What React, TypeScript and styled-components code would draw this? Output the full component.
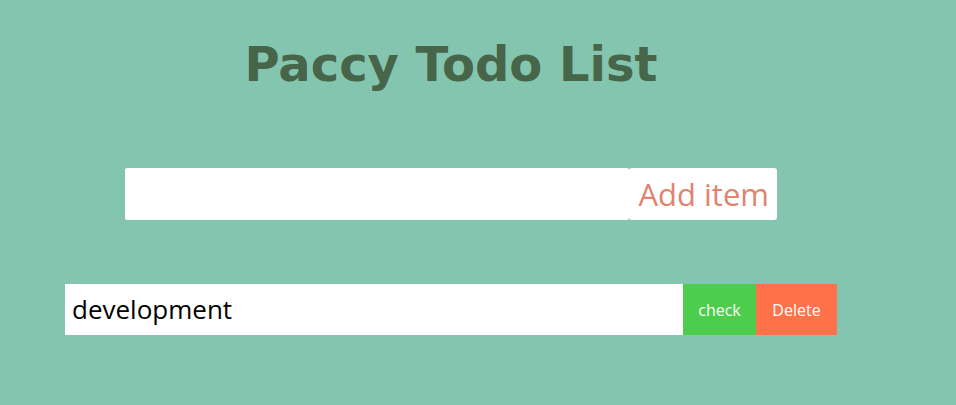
import React from "react";
import styled, { createGlobalStyle } from "styled-components";

const Global = createGlobalStyle`
  html, body { margin: 0; padding: 0; background: #83c5af; }
  body { font-family: "Open Sans", "Noto Sans", sans-serif; }
`;

const Page = styled.div`
  width: 902px;
  height: 405px;
  display: flex;
  flex-direction: column;
  align-items: center;
`;

const Title = styled.h1`
  margin: 34px 0 0;
  font-family: "DejaVu Sans", sans-serif;
  font-weight: bold;
  font-size: 48px;
  line-height: 60px;
  color: #476549;
`;

const AddForm = styled.form`
  display: flex;
  margin-top: 74px;
`;

const Input = styled.input`
  width: 504px;
  height: 52px;
  box-sizing: border-box;
  border: none;
  border-radius: 2px;
  background: #fff;
  outline: none;
  padding: 0 8px;
  font-size: 24px;
`;

const AddButton = styled.button`
  width: 148px;
  height: 52px;
  border: none;
  border-radius: 3px;
  background: #fff;
  color: #e0836f;
  font-family: "Open Sans", sans-serif;
  font-size: 31px;
  padding: 0 8px 0 0;
  text-align: right;
`;

const TodoRow = styled.div`
  display: flex;
  margin-top: 64px;
  height: 51px;
`;

const TodoText = styled.div`
  width: 618px;
  background: #fff;
  color: #000;
  font-family: "Open Sans", sans-serif;
  font-size: 26px;
  display: flex;
  align-items: center;
  padding: 0 0 2px 7px;
  box-sizing: border-box;
`;

const ActionButton = styled.button<{ $bg: string; $w: number }>`
  width: ${(p) => p.$w}px;
  height: 51px;
  border: none;
  background: ${(p) => p.$bg};
  color: #fff;
  font-family: "Open Sans", sans-serif;
  font-size: 16px;
  padding: 0;
`;

export default function App() {
  return (
    <>
      <Global />
      <Page>
        <Title>Paccy Todo List</Title>
        <AddForm onSubmit={(e) => e.preventDefault()}>
          <Input type="text" />
          <AddButton type="submit">Add item</AddButton>
        </AddForm>
        <TodoRow>
          <TodoText>development</TodoText>
          <ActionButton $bg="#4ccd4c" $w={73}>check</ActionButton>
          <ActionButton $bg="#ff7149" $w={81}>Delete</ActionButton>
        </TodoRow>
      </Page>
    </>
  );
}
